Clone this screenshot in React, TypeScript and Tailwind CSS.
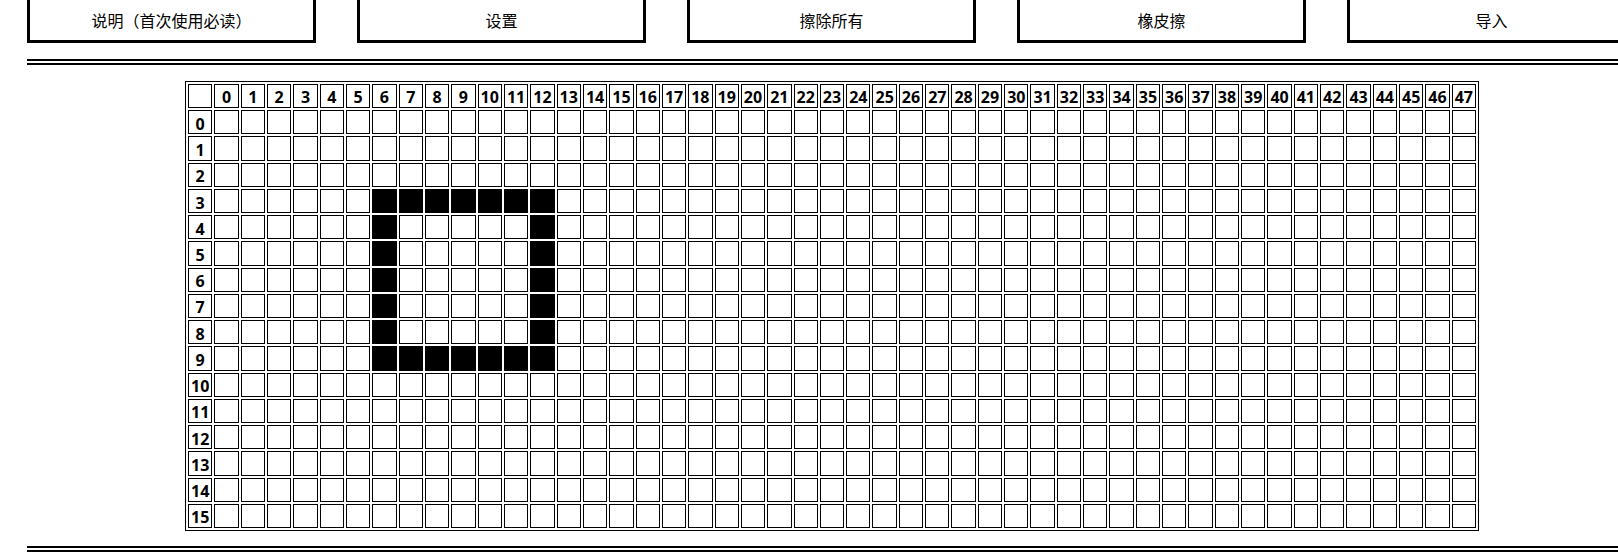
import React from "react";

const buttons = ["说明（首次使用必读）", "设置", "擦除所有", "橡皮擦", "导入"];

const ROWS = 16;
const COLS = 48;

function isOn(r: number, c: number) {
  if (r === 3 || r === 9) return c >= 6 && c <= 12;
  if (r >= 4 && r <= 8) return c === 6 || c === 12;
  return false;
}

export default function App() {
  const cells: React.ReactNode[] = [];
  cells.push(<div key="corner" className="border border-black" />);
  for (let c = 0; c < COLS; c++) {
    cells.push(
      <div key={`h${c}`} className="border border-black flex items-center justify-center pt-[1px]">
        {c}
      </div>
    );
  }
  for (let r = 0; r < ROWS; r++) {
    cells.push(
      <div key={`r${r}`} className="border border-black flex items-center justify-center pt-[3px]">
        {r}
      </div>
    );
    for (let c = 0; c < COLS; c++) {
      cells.push(
        <div
          key={`c${r}-${c}`}
          className={isOn(r, c) ? "border border-black bg-black" : "border border-black bg-white"}
        />
      );
    }
  }

  return (
    <div className="w-full h-[560px] overflow-hidden bg-white">
      <div className="ml-[27px] w-[1610px]">
        <div className="-mt-[3px] flex gap-[41px]">
          {buttons.map((b) => (
            <div
              key={b}
              className="w-[289px] h-[46px] shrink-0 border-[3px] border-black flex items-center justify-center text-[16px] text-black"
              style={{ fontFamily: '"Noto Sans CJK SC", "Noto Sans", sans-serif' }}
            >
              {b}
            </div>
          ))}
        </div>
        <div className="mt-[16px] border-t-[6px] border-double border-black" />
        <div className="mt-[16px] flex justify-center">
          <div
            className="grid grid-cols-[repeat(49,minmax(0,1fr))] grid-rows-[repeat(17,minmax(0,1fr))] gap-[2px] p-[2px] border border-black w-[1294px] h-[450px] text-[16px] font-bold leading-none text-black"
            style={{ fontFamily: '"Open Sans", "Noto Sans", sans-serif' }}
          >
            {cells}
          </div>
        </div>
        <div className="mt-[15px] border-t-[6px] border-double border-black" />
      </div>
    </div>
  );
}
